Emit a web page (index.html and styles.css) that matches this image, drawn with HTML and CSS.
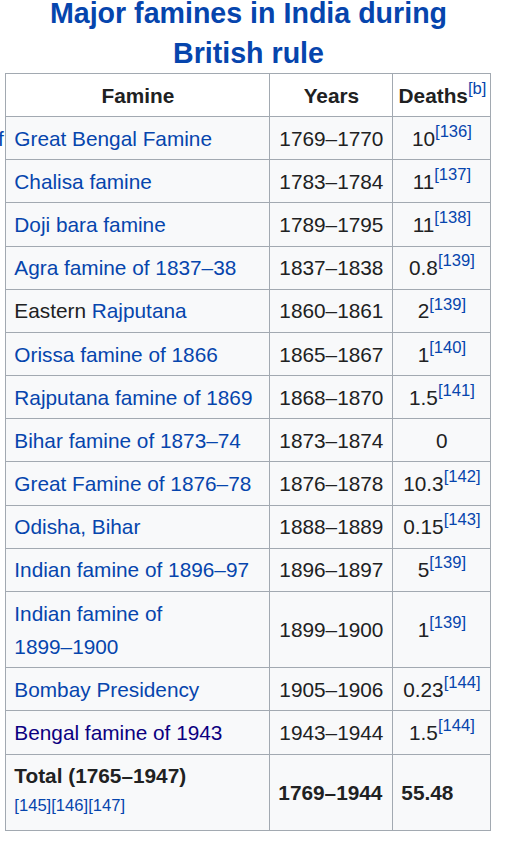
FILE: index.html
```html
<!DOCTYPE html>
<html>
<head>
<meta charset="utf-8">
<link rel="stylesheet" href="styles.css">
</head>
<body>
<div class="page">
  <span class="stray">f</span>
  <div class="caption">Major famines in India during British rule</div>
  <table class="wikitable">
    <colgroup>
      <col class="c1"><col class="c2"><col class="c3">
    </colgroup>
    <thead>
      <tr><th>Famine</th><th>Years</th><th class="deaths">Deaths<sup class="ref">[b]</sup></th></tr>
    </thead>
    <tbody>
      <tr><td><a class="link">Great Bengal Famine</a></td><td class="ctr">1769–1770</td><td class="ctr">10<sup class="ref">[136]</sup></td></tr>
      <tr><td><a class="link">Chalisa famine</a></td><td class="ctr">1783–1784</td><td class="ctr">11<sup class="ref">[137]</sup></td></tr>
      <tr><td><a class="link">Doji bara famine</a></td><td class="ctr">1789–1795</td><td class="ctr">11<sup class="ref">[138]</sup></td></tr>
      <tr><td><a class="link">Agra famine of 1837–38</a></td><td class="ctr">1837–1838</td><td class="ctr">0.8<sup class="ref">[139]</sup></td></tr>
      <tr><td>Eastern <a class="link">Rajputana</a></td><td class="ctr">1860–1861</td><td class="ctr">2<sup class="ref">[139]</sup></td></tr>
      <tr><td><a class="link">Orissa famine of 1866</a></td><td class="ctr">1865–1867</td><td class="ctr">1<sup class="ref">[140]</sup></td></tr>
      <tr><td><a class="link">Rajputana famine of 1869</a></td><td class="ctr">1868–1870</td><td class="ctr">1.5<sup class="ref">[141]</sup></td></tr>
      <tr><td><a class="link">Bihar famine of 1873–74</a></td><td class="ctr">1873–1874</td><td class="ctr">0</td></tr>
      <tr><td><a class="link">Great Famine of 1876–78</a></td><td class="ctr">1876–1878</td><td class="ctr">10.3<sup class="ref">[142]</sup></td></tr>
      <tr><td><a class="link">Odisha, Bihar</a></td><td class="ctr">1888–1889</td><td class="ctr">0.15<sup class="ref">[143]</sup></td></tr>
      <tr><td><a class="link">Indian famine of 1896–97</a></td><td class="ctr">1896–1897</td><td class="ctr">5<sup class="ref">[139]</sup></td></tr>
      <tr><td><a class="link">Indian famine of <span class="nw">1899–1900</span></a></td><td class="ctr">1899–1900</td><td class="ctr">1<sup class="ref">[139]</sup></td></tr>
      <tr><td><a class="link">Bombay Presidency</a></td><td class="ctr">1905–1906</td><td class="ctr">0.23<sup class="ref">[144]</sup></td></tr>
      <tr><td><a class="visited">Bengal famine of 1943</a></td><td class="ctr">1943–1944</td><td class="ctr">1.5<sup class="ref">[144]</sup></td></tr>
      <tr class="total"><td><b>Total (1765–1947)</b><br><span class="refs">[145][146][147]</span></td><td><b>1769–1944</b></td><td><b>55.48</b></td></tr>
    </tbody>
  </table>
</div>
</body>
</html>
```

FILE: styles.css
```css
html, body {
  margin: 0;
  padding: 0;
  background: #ffffff;
}

body {
  font-family: "Liberation Sans", Arial, sans-serif;
  color: #202122;
  font-size: 20.8px;
  overflow: hidden;
}

.page {
  position: relative;
  width: 485px;
  margin-left: 5px;
  margin-top: -7px;
}

.stray {
  position: absolute;
  left: -7px;
  top: 129px;
  color: #0645ad;
  font-size: 20.8px;
  line-height: 33px;
}

.caption {
  font-weight: bold;
  font-size: 28.6px;
  line-height: 40px;
  text-align: center;
  color: #0645ad;
  padding: 0 30px;
  position: relative;
  left: 1px;
}

.wikitable {
  border-collapse: collapse;
  border: 1px solid #a2a9b1;
  background: #f8f9fa;
  width: 485px;
  table-layout: fixed;
  line-height: 33.28px;
}

.c1 { width: 264px; }
.c2 { width: 123px; }
.c3 { width: 98px; }

.wikitable th,
.wikitable td {
  border: 1px solid #a2a9b1;
  padding: 4.7px 7.5px 4.2px 8.32px;
  vertical-align: middle;
}

.wikitable th {
  background: #ffffff;
  font-weight: bold;
  text-align: center;
  white-space: nowrap;
}

.wikitable th.deaths {
  padding-left: 4px;
  padding-right: 2px;
}

.wikitable td {
  text-align: left;
}

.wikitable td.ctr {
  text-align: center;
  white-space: nowrap;
}

.nw {
  white-space: nowrap;
}

.link {
  color: #0645ad;
  text-decoration: none;
}

.visited {
  color: #0b0080;
  text-decoration: none;
}

.ref {
  font-size: 16.6px;
  line-height: 1;
  font-weight: normal;
  color: #0645ad;
  vertical-align: super;
  position: relative;
  top: -1px;
}

.refs {
  font-size: 16.6px;
  color: #0645ad;
  line-height: 26px;
  display: inline-block;
  position: relative;
  top: -5px;
}

.total td {
  white-space: nowrap;
}

.total td:first-child {
  line-height: 33px;
}
```
